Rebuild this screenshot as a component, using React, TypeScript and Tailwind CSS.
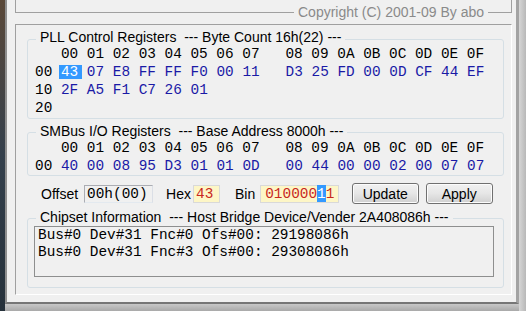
const sans = "font-['Liberation_Sans',Arial,sans-serif]";
const mono = "font-['Liberation_Mono','Courier_New',monospace] text-[14.4px]";

const HEADER = "   00 01 02 03 04 05 06 07   08 09 0A 0B 0C 0D 0E 0F";

const pllRows = [
  { label: "00", bytes: ["43", "07", "E8", "FF", "FF", "F0", "00", "11", "D3", "25", "FD", "00", "0D", "CF", "44", "EF"] },
  { label: "10", bytes: ["2F", "A5", "F1", "C7", "26", "01"] },
  { label: "20", bytes: [] as string[] },
];

const smbusRows = [
  { label: "00", bytes: ["40", "00", "08", "95", "D3", "01", "01", "0D", "00", "44", "00", "00", "02", "00", "07", "07"] },
];

function HexRow({ label, bytes, selected }: { label: string; bytes: string[]; selected?: number }) {
  return (
    <div className="whitespace-pre">
      <span>{label}</span>
      {bytes.map((b, i) => (
        <span key={i}>
          {i === 8 ? "   " : " "}
          {i === selected ? (
            <span className="inline-block h-[14px] leading-[14px] -ml-[2px] pl-[2px] pr-[4px] -mr-[4px] bg-[#3399ff] text-white">
              {b}
            </span>
          ) : (
            <span className="text-[#1a1aa6]">{b}</span>
          )}
        </span>
      ))}
    </div>
  );
}

function Group({ title, className, children }: { title: string; className?: string; children: React.ReactNode }) {
  return (
    <fieldset className={`border border-[#d5dfe5] rounded-[3px] ${className ?? ""}`}>
      <legend className="ml-[8px] px-[4px] pb-[4px] leading-[16px] whitespace-pre">{title}</legend>
      {children}
    </fieldset>
  );
}

function Button({ label, className }: { label: string; className?: string }) {
  return (
    <div
      className={`w-[67px] h-[21px] rounded-[3px] border border-[#707070] bg-gradient-to-b from-[#f2f2f2] via-[#e6e6e6] to-[#d0d0d0] shadow-[inset_0_0_0_1px_#fcfcfc] flex items-center justify-center ${className ?? ""}`}
    >
      {label}
    </div>
  );
}

export default function App() {
  return (
    <div className={`w-[526px] h-[311px] flex overflow-hidden bg-[#f0f0f0] text-black text-[14px] leading-[16px] ${sans}`}>
      <div className="w-[5px] shrink-0 bg-gradient-to-b from-[#5a4838] via-[#34404c] to-[#26313b]" />

      <div className="flex-1 flex flex-col">
        <div className="flex-1 flex flex-col border-l-2 border-l-[#8f8f8f] border-r-[3px] border-r-[#a3a3a3] border-b-2 border-b-[#767676] pl-[8px] pr-[4px]">
          {/* upper panel, cut off by the screenshot */}
          <div className="relative h-[13px] border-l border-r border-b border-[#a0a0a0]">
            <span className="absolute right-[23px] top-[4px] bg-[#f0f0f0] px-[4px] text-[#8a8a8a]">
              Copyright (C) 2001-09 By abo
            </span>
          </div>

          {/* main panel */}
          <div className="flex-1 mt-[11px] mb-[7px] border border-[#a0a0a0] border-r-white border-b-white pl-[11px] pr-[7px] flex flex-col">
            <Group title="PLL Control Registers  --- Byte Count 16h(22) ---" className="mt-[4px]">
              <div className={`-mt-[4.5px] pl-[7px] leading-[18.3px] ${mono}`}>
                <div className="whitespace-pre">{HEADER}</div>
                <HexRow label={pllRows[0].label} bytes={pllRows[0].bytes} selected={0} />
                <HexRow label={pllRows[1].label} bytes={pllRows[1].bytes} />
                <HexRow label={pllRows[2].label} bytes={pllRows[2].bytes} />
              </div>
            </Group>

            <Group title="SMBus I/O Registers  --- Base Address 8000h ---" className="mt-[4px]">
              <div className={`-mt-[4px] pl-[7px] leading-[18px] ${mono}`}>
                <div className="whitespace-pre">{HEADER}</div>
                {smbusRows.map((r) => (
                  <HexRow key={r.label} label={r.label} bytes={r.bytes} />
                ))}
              </div>
            </Group>

            <div className="mt-[7px] h-[22px] flex items-center pl-[14px]">
              <span>Offset</span>
              <div className={`ml-[6px] w-[69px] h-[18px] border border-[#abadb3] border-r-[#dbdfe6] border-b-[#e3e9ef] flex items-center pl-[2px] leading-[16px] ${mono}`}>
                00h(00)
              </div>
              <span className="ml-[13px]">Hex</span>
              <div className={`ml-[2px] w-[27px] h-[18px] border border-[#d9d9d9] bg-[#fdf6c6] flex items-center pl-[2px] text-[#c8281e] leading-[16px] ${mono}`}>
                43
              </div>
              <span className="ml-[15px]">Bin</span>
              <div className={`ml-[5px] w-[79px] h-[18px] border border-[#d9d9d9] bg-[#fdf6c6] flex items-center pl-[4px] text-[#c8281e] whitespace-pre leading-[16px] ${mono}`}>
                <span>010000</span>
                <span className="h-[17px] flex items-center bg-[#3399ff] text-white">1</span>
                <span>1</span>
              </div>
              <Button label="Update" className="ml-[12.5px]" />
              <Button label="Apply" className="ml-[7px]" />
            </div>

            <Group title="Chipset Information  --- Host Bridge Device/Vender 2A408086h ---" className="mt-[4px]">
              <div className={`-mt-[3px] ml-[6px] mr-[9px] mb-[10px] h-[51px] border border-[#8e8f8f] bg-[#f0f0f0] pl-[3px] leading-[17.5px] whitespace-pre ${mono}`}>
                <div>Bus#0 Dev#31 Fnc#0 Ofs#00: 29198086h</div>
                <div>Bus#0 Dev#31 Fnc#3 Ofs#00: 29308086h</div>
              </div>
            </Group>
          </div>
        </div>
        <div className="h-[7px] shrink-0 bg-gradient-to-b from-[#c8c8c8] to-[#a9a9a9]" />
      </div>

      <div className="w-[7px] shrink-0 bg-gradient-to-r from-[#d6d6d6] to-[#b8b8b8]" />
    </div>
  );
}
